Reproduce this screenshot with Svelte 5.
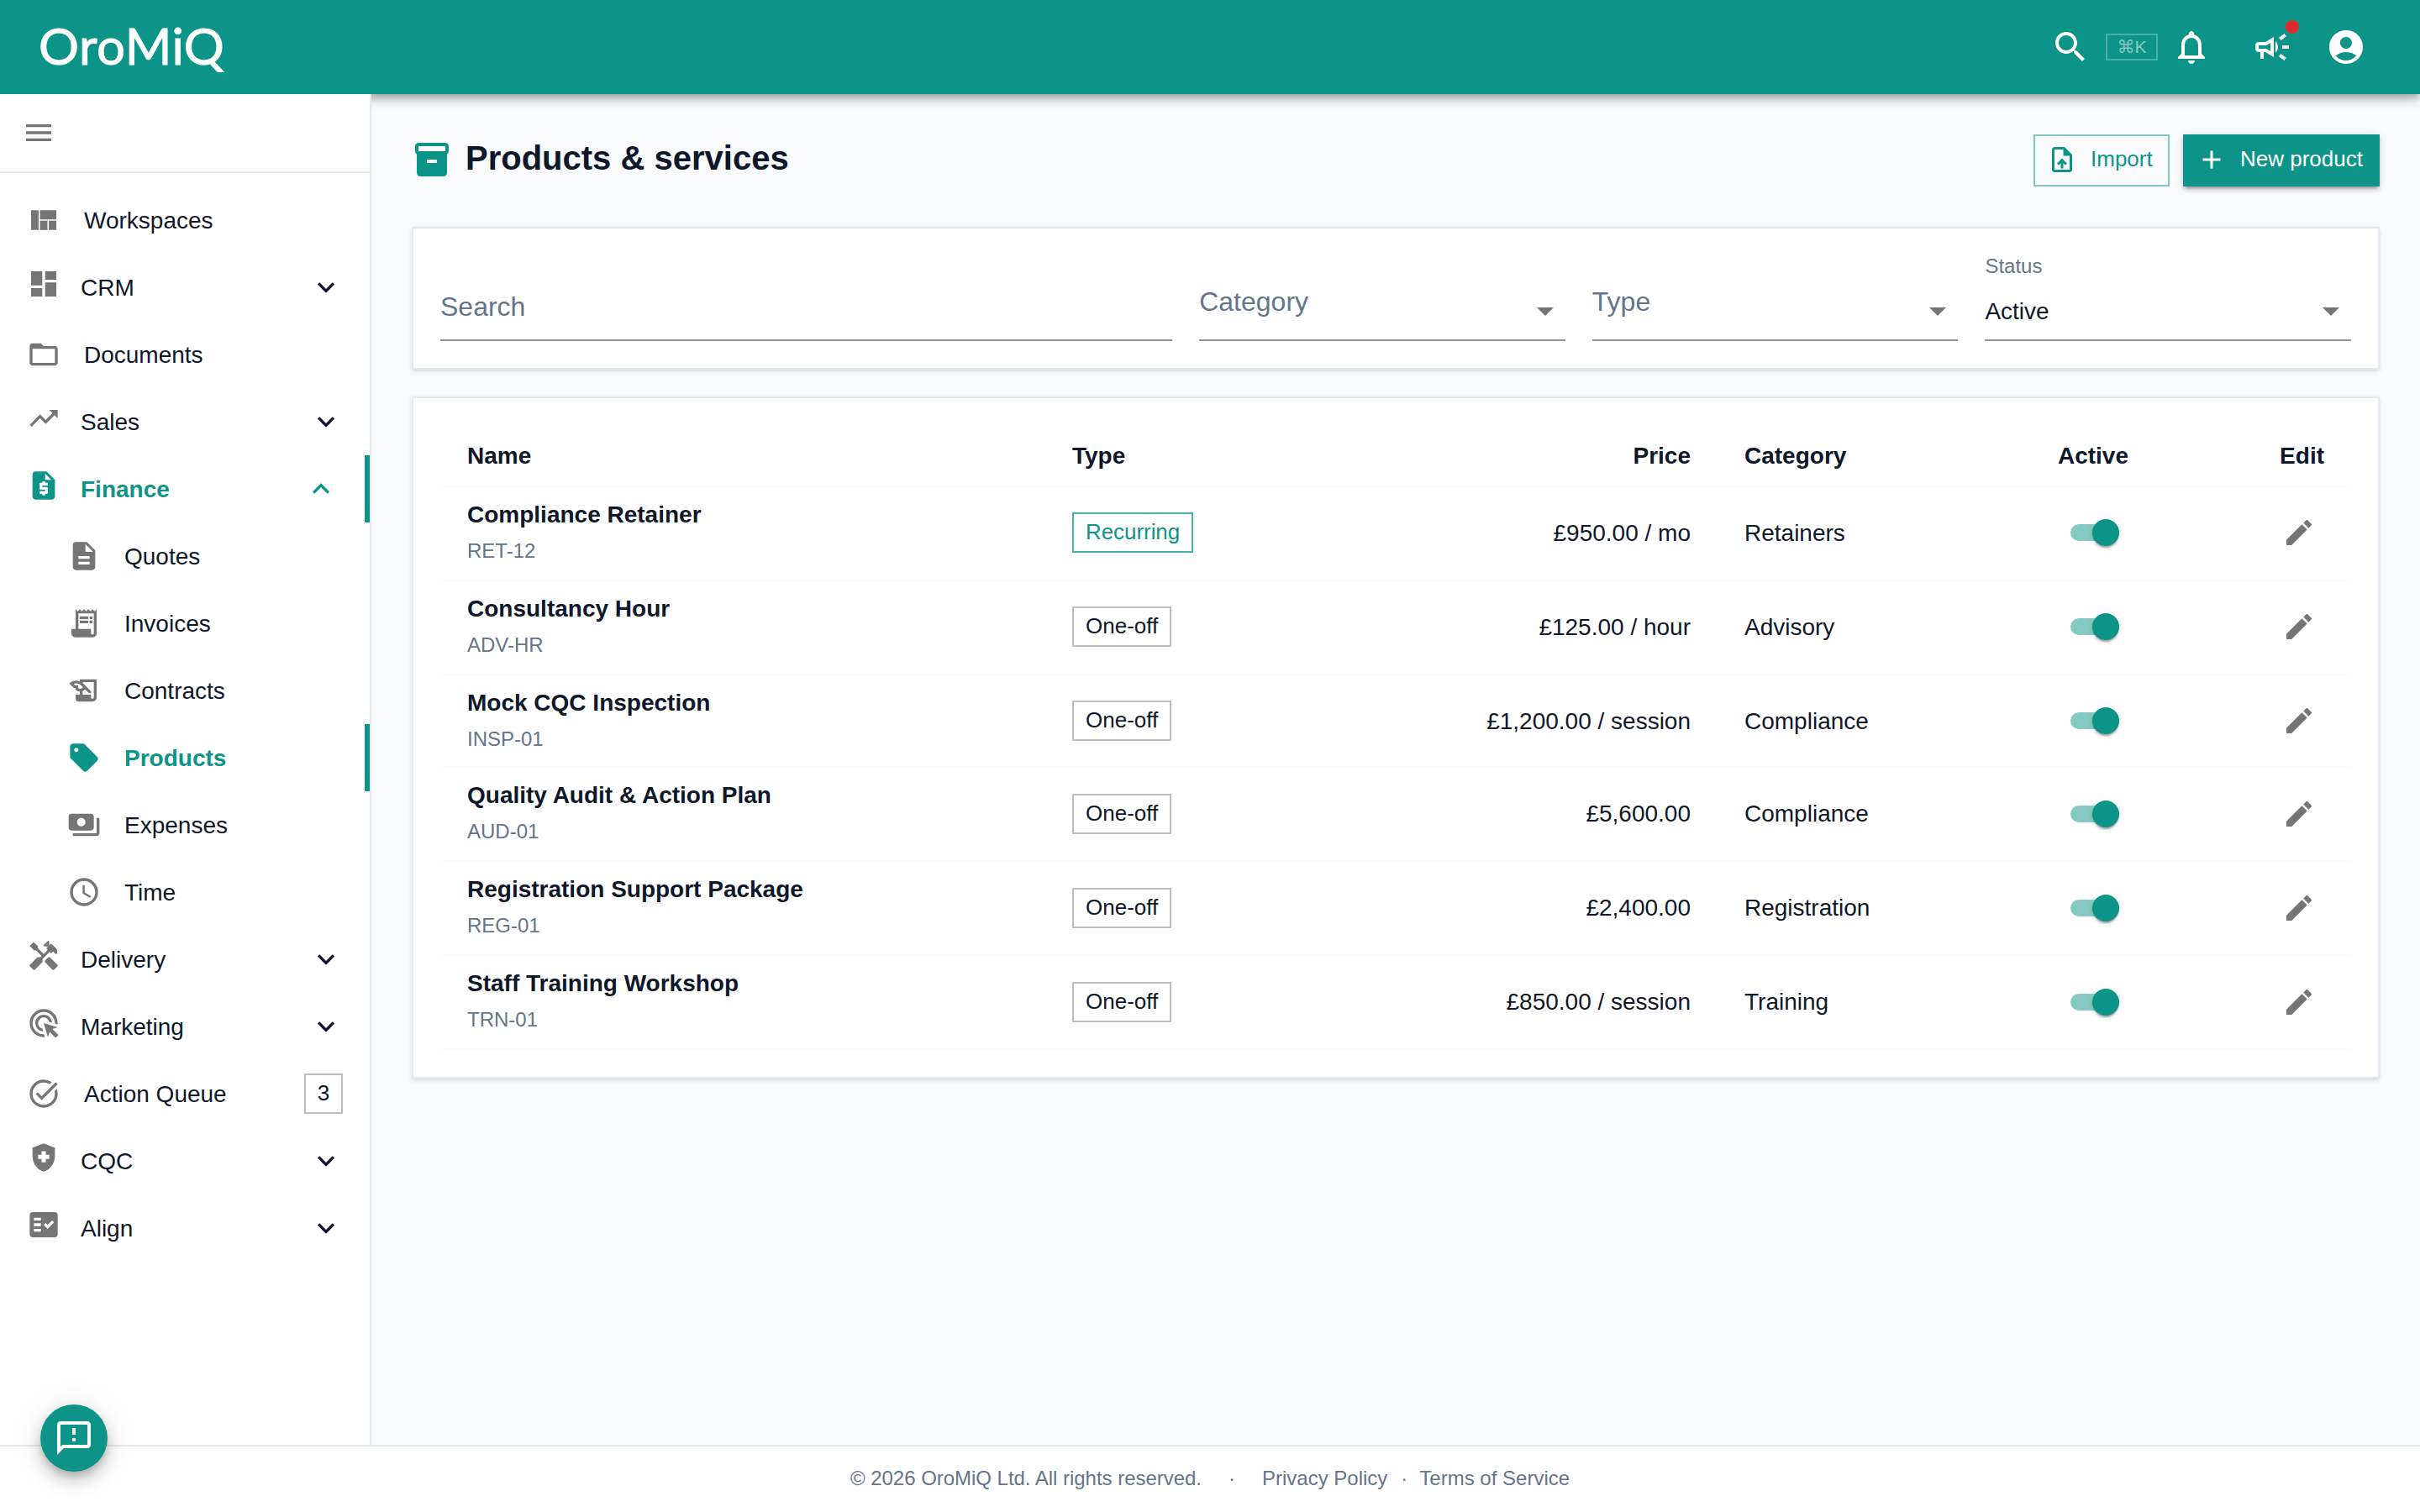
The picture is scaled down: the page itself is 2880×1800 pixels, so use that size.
<script>
  const icons = {
    menu: 'M3 18h18v-2H3v2zm0-5h18v-2H3v2zm0-7v2h18V6H3z',
    quilt: 'M21 5v6.5H9.33V5H21zm-6.33 14v-6.5H9.33V19h5.34zm1-6.5V19H21v-6.5h-5.33zM8.33 19V5H3v14h5.33z',
    dashboard: 'M3 13h8V3H3v10zm0 8h8v-6H3v6zm10 0h8V11h-8v10zm0-18v6h8V3h-8z',
    folder: 'M20 6h-8l-2-2H4c-1.1 0-1.99.9-1.99 2L2 18c0 1.1.9 2 2 2h16c1.1 0 2-.9 2-2V8c0-1.1-.9-2-2-2zm0 12H4V8h16v10z',
    trending: 'M16 6l2.29 2.29-4.88 4.88-4-4L2 16.59 3.41 18l6-6 4 4 6.3-6.29L22 12V6z',
    quote: 'M14 2H6c-1.1 0-1.99.9-1.99 2L4 20c0 1.1.89 2 1.99 2H18c1.1 0 2-.9 2-2V8l-6-6zm1 10h-4v1h3c.55 0 1 .45 1 1v3c0 .55-.45 1-1 1h-1v1h-2v-1H9v-2h4v-1h-3c-.55 0-1-.45-1-1v-3c0-.55.45-1 1-1h1V9h2v1h2v2zm-2-4V3.5L17.5 8H13z',
    description: 'M14 2H6c-1.1 0-1.99.9-1.99 2L4 20c0 1.1.89 2 1.99 2H18c1.1 0 2-.9 2-2V8l-6-6zm2 16H8v-2h8v2zm0-4H8v-2h8v2zm-3-5V3.5L18.5 9H13z',
    receipt: 'M19.5 3.5L18 2l-1.5 1.5L15 2l-1.5 1.5L12 2l-1.5 1.5L9 2 7.5 3.5 6 2v14H3v3c0 1.66 1.34 3 3 3h12c1.66 0 3-1.34 3-3V2l-1.5 1.5zM19 19c0 .55-.45 1-1 1s-1-.45-1-1v-3H8V5h11v14zM9 7h6v2H9zM16 7h2v2h-2zM9 10h6v2H9zM16 10h2v2h-2z',
    contract: 'M9 4v1.38c-.83-.33-1.72-.5-2.61-.5-1.79 0-3.58.68-4.95 2.05l3.33 3.33h1.11v1.11c.86.86 1.98 1.31 3.11 1.36V15H6v3c0 1.1.9 2 2 2h10c1.66 0 3-1.34 3-3V4H9zm-1.11 6.41V8.26H5.61L4.57 7.22a5.07 5.07 0 0 1 1.82-.34c1.34 0 2.59.52 3.54 1.46l1.41 1.41-.2.2c-.51.51-1.19.8-1.92.8-.47 0-.93-.12-1.33-.34zM19 17c0 .55-.45 1-1 1s-1-.45-1-1v-2h-6v-2.59c.57-.23 1.1-.57 1.56-1.03l.2-.2L15.59 14H17v-1.41l-6-5.97V6h8v11z',
    tag: 'M21.41 11.41l-8.83-8.83C12.21 2.21 11.7 2 11.17 2H4C2.9 2 2 2.9 2 4v7.17c0 .53.21 1.04.59 1.41l8.83 8.83c.78.78 2.05.78 2.83 0l7.17-7.17c.78-.78.78-2.04-.01-2.83zM6.5 8C5.67 8 5 7.33 5 6.5S5.67 5 6.5 5 8 5.67 8 6.5 7.33 8 6.5 8z',
    payments: 'M19 14V6c0-1.1-.9-2-2-2H3c-1.1 0-2 .9-2 2v8c0 1.1.9 2 2 2h14c1.1 0 2-.9 2-2zm-9-1c-1.66 0-3-1.34-3-3s1.34-3 3-3 3 1.34 3 3-1.34 3-3 3zm13-6v11c0 1.1-.9 2-2 2H4v-2h17V7h2z',
    clock: 'M11.99 2C6.47 2 2 6.48 2 12s4.47 10 9.99 10C17.52 22 22 17.52 22 12S17.52 2 11.99 2zM12 20c-4.42 0-8-3.58-8-8s3.58-8 8-8 8 3.58 8 8-3.58 8-8 8zM12.5 7H11v6l5.25 3.15.75-1.23-4.5-2.67z',
    tools: 'M21.67 18.17l-5.3-5.3h-.99l-2.54 2.54v.99l5.3 5.3c.39.39 1.02.39 1.41 0l2.12-2.12c.39-.38.39-1.02 0-1.41zM17.34 10.19l1.41-1.41 2.12 2.12c1.17-1.17 1.17-3.07 0-4.24l-3.54-3.54-1.41 1.41V1.71L15.22 1l-3.54 3.54.71.71h2.83l-1.41 1.41 1.06 1.06-2.89 2.89-4.13-4.13V5.06L4.83 2.04 2 4.87 5.03 7.9h1.41l4.13 4.13-.85.85H7.6l-5.3 5.3c-.39.39-.39 1.02 0 1.41l2.12 2.12c.39.39 1.02.39 1.41 0l5.3-5.3v-2.12l5.15-5.15 1.06 1.05z',
    ads: 'M11.71 17.99A5.993 5.993 0 0 1 6 12c0-3.31 2.69-6 6-6 3.22 0 5.84 2.53 5.99 5.71l-2.1-.63a3.999 3.999 0 1 0-4.81 4.81l.63 2.1zM22 12c0 .3-.01.6-.04.9l-1.97-.59c.01-.1.01-.21.01-.31 0-4.42-3.58-8-8-8s-8 3.58-8 8 3.58 8 8 8c.1 0 .21 0 .31-.01l.59 1.97c-.3.03-.6.04-.9.04-5.52 0-10-4.48-10-10S6.48 2 12 2s10 4.48 10 10zm-3.77 4.26L22 15l-10-3 3 10 1.26-3.77 4.27 4.27 1.98-1.98-4.28-4.26z',
    task: 'M22 5.18L10.59 16.6l-4.24-4.24 1.41-1.41 2.83 2.83 10-10L22 5.18zm-2.21 5.04c.13.57.21 1.17.21 1.78 0 4.42-3.58 8-8 8s-8-3.58-8-8 3.58-8 8-8c1.58 0 3.04.46 4.28 1.25l1.44-1.44A9.9 9.9 0 0 0 12 2C6.48 2 2 6.48 2 12s4.48 10 10 10 10-4.48 10-10c0-1.19-.22-2.33-.6-3.39l-1.61 1.61z',
    shield: 'M10.5 13H8v-3h2.5V7.5h3V10H16v3h-2.5v2.5h-3V13zM12 2L4 5v6.09c0 5.05 3.41 9.76 8 10.91 4.59-1.15 8-5.86 8-10.91V5l-8-3z',
    fact: 'M20 3H4c-1.1 0-2 .9-2 2v14c0 1.1.9 2 2 2h16c1.1 0 2-.9 2-2V5c0-1.1-.9-2-2-2zM10 17H5v-2h5v2zm0-4H5v-2h5v2zm0-4H5V7h5v2zm4.82 6L12 12.16l1.41-1.41 1.41 1.42L17.99 9l1.42 1.42L14.82 15z',
    down: 'M7.41 8.59L12 13.17l4.59-4.58L18 10l-6 6-6-6 1.41-1.41z',
    up: 'M7.41 15.41L12 10.83l4.59 4.58L18 14l-6-6-6 6z',
    search: 'M15.5 14h-.79l-.28-.27C15.41 12.59 16 11.11 16 9.5 16 5.91 13.09 3 9.5 3S3 5.91 3 9.5 5.91 16 9.5 16c1.61 0 3.09-.59 4.23-1.57l.27.28v.79l5 4.99L20.49 19l-4.99-5zm-6 0C7.01 14 5 11.99 5 9.5S7.01 5 9.5 5 14 7.01 14 9.5 11.99 14 9.5 14z',
    bell: 'M12 22c1.1 0 2-.9 2-2h-4c0 1.1.9 2 2 2zm6-6v-5c0-3.07-1.63-5.64-4.5-6.32V4c0-.83-.67-1.5-1.5-1.5s-1.5.67-1.5 1.5v.68C7.64 5.36 6 7.92 6 11v5l-2 2v1h16v-1l-2-2zm-2 1H8v-6c0-2.48 1.51-4.5 4-4.5s4 2.02 4 4.5v6z',
    campaign: 'M18 11v2h4v-2h-4zM16 17.61c.96.71 2.21 1.65 3.2 2.39.4-.53.8-1.07 1.2-1.6-.99-.74-2.24-1.68-3.2-2.4-.4.54-.8 1.08-1.2 1.61zM20.4 5.6C20 5.07 19.6 4.53 19.2 4c-.99.74-2.24 1.68-3.2 2.4.4.53.8 1.07 1.2 1.6.96-.72 2.21-1.65 3.2-2.4zM4 9c-1.1 0-2 .9-2 2v2c0 1.1.9 2 2 2h1v4h2v-4h1l5 3V6L8 9H4zm5.03 1.71L11 9.53v4.94l-1.97-1.18-.48-.29H4v-2h4.55l.48-.29zM15.5 12c0-1.33-.58-2.53-1.5-3.35v6.69c.92-.81 1.5-2.01 1.5-3.34z',
    account: 'M12 2C6.48 2 2 6.48 2 12s4.48 10 10 10 10-4.48 10-10S17.52 2 12 2zm0 4c1.93 0 3.5 1.57 3.5 3.5S13.93 13 12 13s-3.5-1.57-3.5-3.5S10.07 6 12 6zm0 14c-2.03 0-4.43-.82-6.14-2.88a9.947 9.947 0 0 1 12.28 0C16.43 19.18 14.03 20 12 20z',
    inventory: 'M20 2H4c-1 0-2 .9-2 2v3.01c0 .72.43 1.34 1 1.69V20c0 1.1 1.1 2 2 2h14c.9 0 2-.9 2-2V8.7c.57-.35 1-.97 1-1.69V4c0-1.1-1-2-2-2zm-5 12H9v-2h6v2zm5-7H4V4h16v3z',
    upload: 'M14 2H6c-1.1 0-1.99.9-1.99 2L4 20c0 1.1.89 2 1.99 2H18c1.1 0 2-.9 2-2V8l-6-6zm4 18H6V4h7v5h5v11zM8 15.01l1.41 1.41L11 14.84V19h2v-4.16l1.59 1.59L16 15.01 12.01 11z',
    add: 'M19 13h-6v6h-2v-6H5v-2h6V5h2v6h6v2z',
    caret: 'M7 10l5 5 5-5z',
    edit: 'M3 17.25V21h3.75L17.81 9.94l-3.75-3.75L3 17.25zM20.71 7.04c.39-.39.39-1.02 0-1.41l-2.34-2.34c-.39-.39-1.02-.39-1.41 0l-1.83 1.83 3.75 3.75 1.83-1.83z',
    feedback: 'M20 2H4c-1.1 0-1.99.9-1.99 2L2 22l4-4h14c1.1 0 2-.9 2-2V4c0-1.1-.9-2-2-2zm0 14H5.17l-.59.59-.58.58V4h16v12zm-9-4h2v2h-2zm0-6h2v4h-2z'
  };

  const nav = [
    { label: 'Workspaces', icon: 'quilt' },
    { label: 'CRM', icon: 'dashboard', group: true },
    { label: 'Documents', icon: 'folder' },
    { label: 'Sales', icon: 'trending', group: true },
    { label: 'Finance', icon: 'quote', group: true, active: true },
    { label: 'Quotes', icon: 'description', sub: true },
    { label: 'Invoices', icon: 'receipt', sub: true },
    { label: 'Contracts', icon: 'contract', sub: true },
    { label: 'Products', icon: 'tag', sub: true, active: true },
    { label: 'Expenses', icon: 'payments', sub: true },
    { label: 'Time', icon: 'clock', sub: true },
    { label: 'Delivery', icon: 'tools', group: true },
    { label: 'Marketing', icon: 'ads', group: true },
    { label: 'Action Queue', icon: 'task', badge: 3 },
    { label: 'CQC', icon: 'shield', group: true },
    { label: 'Align', icon: 'fact', group: true }
  ];

  const products = [
    { name: 'Compliance Retainer', code: 'RET-12', type: 'Recurring', price: '£950.00 / mo', category: 'Retainers' },
    { name: 'Consultancy Hour', code: 'ADV-HR', type: 'One-off', price: '£125.00 / hour', category: 'Advisory' },
    { name: 'Mock CQC Inspection', code: 'INSP-01', type: 'One-off', price: '£1,200.00 / session', category: 'Compliance' },
    { name: 'Quality Audit & Action Plan', code: 'AUD-01', type: 'One-off', price: '£5,600.00', category: 'Compliance' },
    { name: 'Registration Support Package', code: 'REG-01', type: 'One-off', price: '£2,400.00', category: 'Registration' },
    { name: 'Staff Training Workshop', code: 'TRN-01', type: 'One-off', price: '£850.00 / session', category: 'Training' }
  ];
</script>

{#snippet icon(name, size = 'md')}
  <svg class="icon {size}" viewBox="0 0 24 24" aria-hidden="true"><path fill-rule="evenodd" d={icons[name]} /></svg>
{/snippet}

<div class="app">
  <header class="appbar">
    <div class="logo">OroMiQ</div>
    <div class="actions">
      {@render icon('search', 'lg')}
      <kbd><span class="cmd">⌘</span>K</kbd>
      {@render icon('bell', 'lg')}
      <div class="announce">
        {@render icon('campaign', 'lg')}
        <span class="dot"></span>
      </div>
      {@render icon('account', 'lg')}
    </div>
  </header>

  <div class="body">
    <aside>
      <div class="drawer-head">{@render icon('menu')}</div>
      <nav>
        {#each nav as item}
          <div class="item" class:group={item.group} class:sub={item.sub} class:active={item.active}>
            {@render icon(item.icon)}
            <span class="label">{item.label}</span>
            {#if item.group}
              <span class="chevron">{@render icon(item.active ? 'up' : 'down')}</span>
            {/if}
            {#if item.badge}<span class="badge">{item.badge}</span>{/if}
          </div>
        {/each}
      </nav>
    </aside>

    <main>
      <div class="title-row">
        {@render icon('inventory', 'lg')}
        <h1>Products &amp; services</h1>
        <button class="btn outlined">{@render icon('upload', 'sm')}<span>Import</span></button>
        <button class="btn filled">{@render icon('add', 'sm')}<span>New product</span></button>
      </div>

      <section class="card filters">
        <div class="field search"><span class="placeholder">Search</span></div>
        <div class="field"><span class="placeholder">Category</span>{@render icon('caret', 'lg')}</div>
        <div class="field"><span class="placeholder">Type</span>{@render icon('caret', 'lg')}</div>
        <div class="field select">
          <span class="small-label">Status</span>
          <span class="value">Active</span>
          {@render icon('caret', 'lg')}
        </div>
      </section>

      <section class="card table">
        <div class="row head">
          <span class="text">Name</span>
          <span class="text">Type</span>
          <span class="text right">Price</span>
          <span class="text">Category</span>
          <span class="text center">Active</span>
          <span class="text right">Edit</span>
        </div>
        {#each products as p}
          <div class="row">
            <div class="name"><strong>{p.name}</strong><small>{p.code}</small></div>
            <div class="control type"><span class="chip" class:recurring={p.type === 'Recurring'}>{p.type}</span></div>
            <div class="text right">{p.price}</div>
            <div class="text">{p.category}</div>
            <div class="control toggle-cell"><span class="toggle"><span class="thumb"></span></span></div>
            <div class="control edit">{@render icon('edit')}</div>
          </div>
        {/each}
      </section>
    </main>
  </div>

  <footer>
    <span class="copyright">© 2026 OroMiQ Ltd. All rights reserved.</span>
    <span class="sep wide">·</span>
    <span>Privacy Policy</span>
    <span class="sep">·</span>
    <span>Terms of Service</span>
  </footer>

  <button class="fab" aria-label="Feedback">{@render icon('feedback', 'lg')}</button>
</div>

<style>
  :global(body) {
    background: #f8fafc;
  }
  .app {
    --teal: #0d9488;
    --ink: #0f172a;
    --muted: #64748b;
    --line: #e2e8f0;
    --grey: #757575;
    display: flex;
    flex-direction: column;
    width: 2880px;
    height: 1800px;
    overflow: hidden;
    background: #f8fafc;
    color: var(--ink);
    font: 28px/42px 'Liberation Sans', Arial, sans-serif;
  }
  .app * {
    box-sizing: border-box;
  }
  .icon {
    display: block;
    flex: none;
    width: 40px;
    height: 40px;
    fill: currentColor;
  }
  .icon.sm {
    width: 36px;
    height: 36px;
  }
  .icon.lg {
    width: 48px;
    height: 48px;
  }

  .appbar {
    flex: none;
    display: flex;
    align-items: center;
    justify-content: space-between;
    height: 112px;
    padding: 0 64px 0 46px;
    background: var(--teal);
    color: #fff;
    box-shadow: 0 4px 8px -2px rgba(0, 0, 0, 0.2), 0 8px 10px rgba(0, 0, 0, 0.14), 0 2px 20px rgba(0, 0, 0, 0.12);
  }
  .logo {
    padding-bottom: 4px;
    font: 60px/108px Lato, sans-serif;
    letter-spacing: 0.5px;
    -webkit-text-stroke: 1px #fff;
  }
  .actions {
    display: flex;
    align-items: center;
  }
  kbd {
    display: flex;
    align-items: center;
    justify-content: center;
    width: 62px;
    height: 32px;
    margin: 0 16px 0 18px;
    border: 2px solid rgba(255, 255, 255, 0.25);
    color: rgba(255, 255, 255, 0.5);
    font: 21px/28px 'Liberation Sans', sans-serif;
  }
  .cmd {
    font: 21px/28px 'DejaVu Sans', sans-serif;
  }
  .announce {
    position: relative;
    margin: 0 40px 0 48px;
  }
  .dot {
    position: absolute;
    top: -8px;
    right: -8px;
    width: 16px;
    height: 16px;
    border-radius: 50%;
    background: #dc2c2c;
  }

  .body {
    flex: 1;
    display: flex;
    min-height: 0;
  }
  aside {
    position: relative;
    flex: none;
    width: 442px;
    border-right: 2px solid var(--line);
    background: #fff;
  }
  .drawer-head {
    display: flex;
    align-items: center;
    height: 94px;
    padding-left: 26px;
    border-bottom: 2px solid var(--line);
    color: var(--grey);
  }
  nav {
    padding-top: 16px;
  }
  .item {
    display: flex;
    align-items: center;
    height: 80px;
    padding: 0 32px;
    border-right: 0 solid var(--teal);
  }
  .item > :global(.icon) {
    color: var(--grey);
  }
  .label {
    flex: 1;
    margin-left: 28px;
    padding-top: 2px;
  }
  .group > :global(.icon) {
    margin-bottom: 8px;
  }
  .group .label {
    margin-left: 24px;
  }
  .sub {
    padding-left: 80px;
  }
  .active {
    border-right-width: 6px;
    color: var(--teal);
    font-weight: 700;
  }
  .active > :global(.icon) {
    color: var(--teal);
  }
  .badge {
    width: 46px;
    height: 48px;
    border: 2px solid #bdbdbd;
    font-size: 26px;
    line-height: 42px;
    text-align: center;
  }

  main {
    flex: 1;
    padding: 48px 48px 0;
  }
  .title-row {
    display: flex;
    align-items: center;
    height: 62px;
  }
  .title-row > :global(.icon) {
    margin-bottom: 2px;
    color: var(--teal);
  }
  h1 {
    flex: 1;
    margin: -6px 0 0 16px;
    font-size: 40px;
    line-height: 60px;
    font-weight: 700;
  }
  .btn {
    display: flex;
    align-items: center;
    gap: 16px;
    height: 62px;
    margin: 0;
    border: 0;
    border-radius: 0;
    font: 26px/40px 'Liberation Sans', Arial, sans-serif;
    white-space: nowrap;
  }
  .btn span {
    margin-top: -2px;
  }
  .btn.outlined {
    width: 162px;
    padding: 0 0 2px 14px;
    border: 2px solid rgba(13, 148, 136, 0.5);
    background: transparent;
    color: var(--teal);
  }
  .btn.filled {
    width: 234px;
    margin-left: 16px;
    padding: 0 0 2px 16px;
    background: var(--teal);
    color: #fff;
    box-shadow: 0 6px 2px -4px rgba(0, 0, 0, 0.2), 0 4px 4px rgba(0, 0, 0, 0.14), 0 2px 10px rgba(0, 0, 0, 0.12);
  }

  .card {
    border: 2px solid var(--line);
    background: #fff;
    box-shadow: 0 2px 6px rgba(0, 0, 0, 0.1), 0 2px 4px -2px rgba(0, 0, 0, 0.1);
  }
  .filters {
    display: grid;
    grid-template-columns: 2fr 1fr 1fr 1fr;
    gap: 32px;
    height: 170px;
    margin-top: 48px;
    padding: 32px;
  }
  .field {
    display: flex;
    align-items: flex-end;
    justify-content: space-between;
    height: 102px;
    border-bottom: 2px solid #949494;
    color: var(--grey);
  }
  .field > :global(.icon) {
    margin-bottom: 10px;
  }
  .placeholder {
    margin-bottom: 24px;
    color: var(--muted);
    font-size: 32px;
  }
  .search .placeholder {
    margin-bottom: 18px;
  }
  .select {
    display: grid;
    grid-template-columns: 1fr 48px;
    grid-template-rows: 42px 58px;
  }
  .small-label {
    grid-column: 1 / 3;
    align-self: end;
    margin-bottom: 11px;
    color: var(--muted);
    font-size: 24px;
    line-height: 36px;
  }
  .value {
    align-self: end;
    margin-bottom: 12px;
    color: var(--ink);
  }

  .table {
    height: 812px;
    margin-top: 32px;
    padding: 32px;
  }
  .row {
    display: grid;
    grid-template-columns: 720px 396px 404px 356px 182px 216px;
    align-items: center;
    height: 112px;
    padding-bottom: 2px;
    border-bottom: 2px solid #fbfcfd;
  }
  .row > * {
    padding: 0 32px;
  }
  .row > .text {
    padding-top: 2px;
  }
  .row:nth-child(4) {
    height: 110px;
    padding-bottom: 0;
  }
  .row:nth-child(n + 5) > .control {
    padding-top: 2px;
  }
  .head {
    height: 74px;
    padding-bottom: 0;
    font-weight: 700;
  }
  .right {
    text-align: right;
  }
  .head .center {
    padding-left: 0;
    padding-right: 0;
    text-align: center;
  }
  .name {
    display: flex;
    flex-direction: column;
    gap: 1px;
  }
  .name small {
    color: var(--muted);
    font-size: 24px;
  }
  .type {
    display: flex;
  }
  .chip {
    height: 48px;
    padding: 0 14px;
    border: 2px solid #bdbdbd;
    font-size: 26px;
    line-height: 42px;
  }
  .recurring {
    border-color: #4db1a8;
    color: var(--teal);
    letter-spacing: -0.06px;
  }
  .row .toggle-cell {
    padding-left: 64px;
    padding-right: 0;
  }
  .toggle {
    display: flex;
    align-items: center;
    justify-content: flex-end;
    width: 58px;
    height: 20px;
    border-radius: 10px;
    background: #86c9c3;
  }
  .thumb {
    flex: none;
    width: 32px;
    height: 32px;
    border-radius: 50%;
    background: var(--teal);
    box-shadow: 0 4px 2px -2px rgba(0, 0, 0, 0.2), 0 2px 2px rgba(0, 0, 0, 0.14), 0 2px 6px rgba(0, 0, 0, 0.12);
  }
  .row .edit {
    display: flex;
    justify-content: flex-end;
    padding-right: 42px;
    color: var(--grey);
  }

  footer {
    flex: none;
    display: flex;
    align-items: center;
    justify-content: center;
    height: 80px;
    padding-bottom: 2px;
    border-top: 2px solid var(--line);
    background: #fff;
    color: var(--muted);
    font-size: 24px;
    line-height: 40px;
  }
  .copyright {
    letter-spacing: -0.03px;
  }
  .sep {
    margin: 0 14px 0 16px;
  }
  .sep.wide {
    margin: 0 32px;
  }
  .fab {
    position: absolute;
    left: 48px;
    top: 1672px;
    display: grid;
    place-items: center;
    width: 80px;
    height: 80px;
    padding: 0;
    border: 0;
    border-radius: 50%;
    background: var(--teal);
    color: #fff;
    box-shadow: 0 6px 10px -2px rgba(0, 0, 0, 0.2), 0 12px 20px rgba(0, 0, 0, 0.14), 0 2px 36px rgba(0, 0, 0, 0.12);
  }
</style>
